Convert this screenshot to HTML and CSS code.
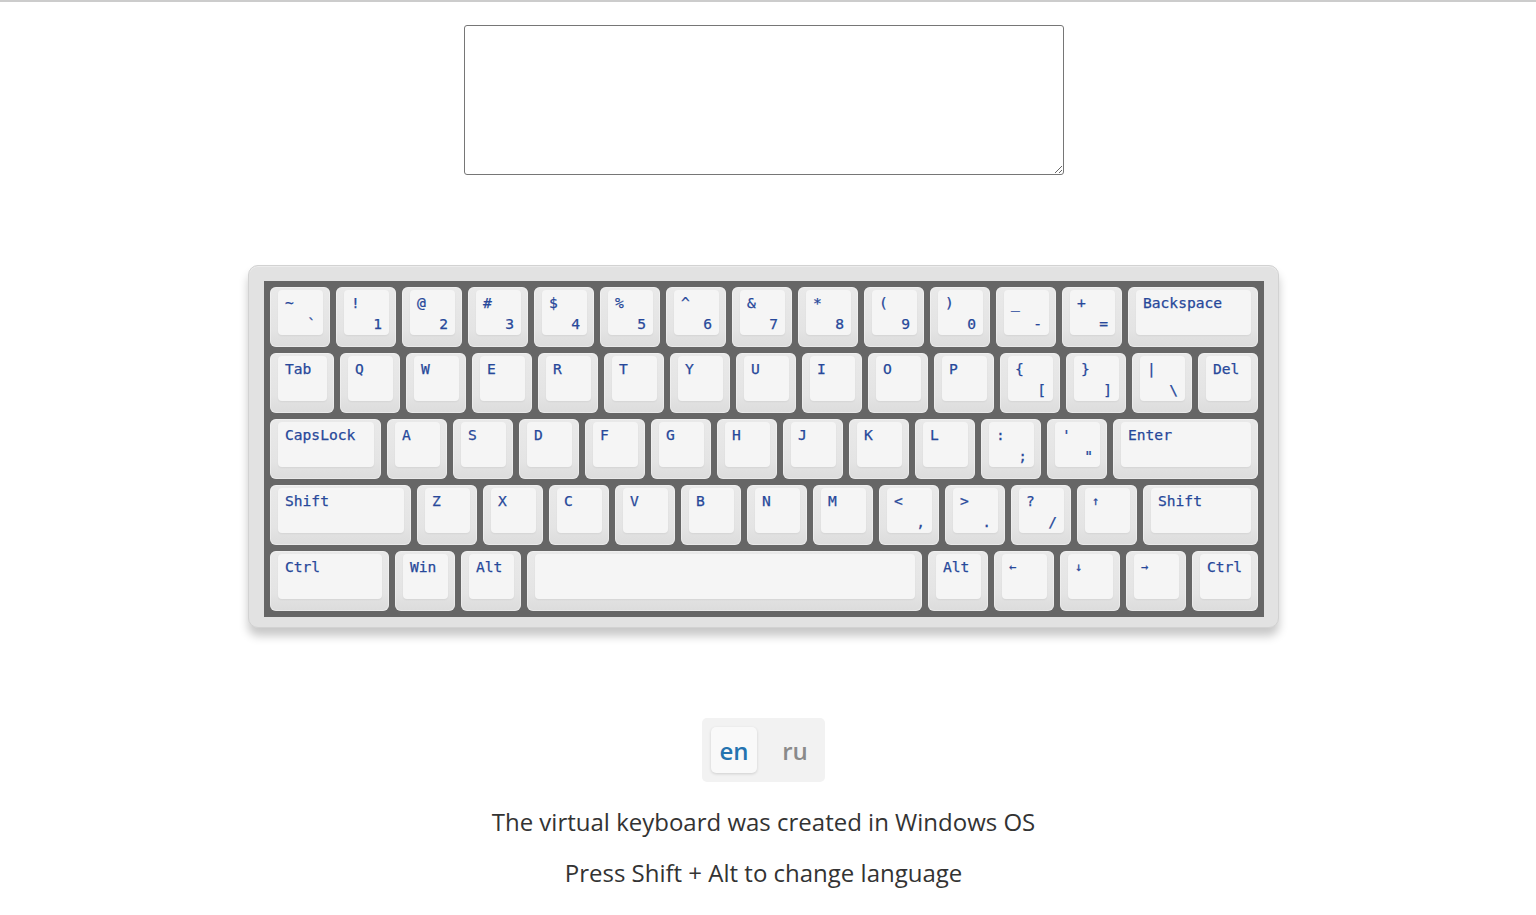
FILE: index.html
```html
<!DOCTYPE html>
<html lang="en">
<head>
<meta charset="utf-8">
<title>Virtual Keyboard</title>
<link rel="stylesheet" href="styles.css">
</head>
<body>
<div class="topline"></div>
<main class="page">
  <textarea class="input"></textarea>

  <div class="keyboard">
    <div class="plate">
      <div class="row">
        <div class="key"><div class="cap"><span class="t">~</span><span class="b">`</span></div></div>
        <div class="key"><div class="cap"><span class="t">!</span><span class="b">1</span></div></div>
        <div class="key"><div class="cap"><span class="t">@</span><span class="b">2</span></div></div>
        <div class="key"><div class="cap"><span class="t">#</span><span class="b">3</span></div></div>
        <div class="key"><div class="cap"><span class="t">$</span><span class="b">4</span></div></div>
        <div class="key"><div class="cap"><span class="t">%</span><span class="b">5</span></div></div>
        <div class="key"><div class="cap"><span class="t">^</span><span class="b">6</span></div></div>
        <div class="key"><div class="cap"><span class="t">&amp;</span><span class="b">7</span></div></div>
        <div class="key"><div class="cap"><span class="t">*</span><span class="b">8</span></div></div>
        <div class="key"><div class="cap"><span class="t">(</span><span class="b">9</span></div></div>
        <div class="key"><div class="cap"><span class="t">)</span><span class="b">0</span></div></div>
        <div class="key"><div class="cap"><span class="t">_</span><span class="b">-</span></div></div>
        <div class="key"><div class="cap"><span class="t">+</span><span class="b">=</span></div></div>
        <div class="key w130"><div class="cap"><span class="t">Backspace</span></div></div>
      </div>
      <div class="row">
        <div class="key w64"><div class="cap"><span class="t">Tab</span></div></div>
        <div class="key"><div class="cap"><span class="t">Q</span></div></div>
        <div class="key"><div class="cap"><span class="t">W</span></div></div>
        <div class="key"><div class="cap"><span class="t">E</span></div></div>
        <div class="key"><div class="cap"><span class="t">R</span></div></div>
        <div class="key"><div class="cap"><span class="t">T</span></div></div>
        <div class="key"><div class="cap"><span class="t">Y</span></div></div>
        <div class="key"><div class="cap"><span class="t">U</span></div></div>
        <div class="key"><div class="cap"><span class="t">I</span></div></div>
        <div class="key"><div class="cap"><span class="t">O</span></div></div>
        <div class="key"><div class="cap"><span class="t">P</span></div></div>
        <div class="key"><div class="cap"><span class="t">{</span><span class="b">[</span></div></div>
        <div class="key"><div class="cap"><span class="t">}</span><span class="b">]</span></div></div>
        <div class="key"><div class="cap"><span class="t">|</span><span class="b">\</span></div></div>
        <div class="key"><div class="cap"><span class="t">Del</span></div></div>
      </div>
      <div class="row">
        <div class="key w111"><div class="cap"><span class="t">CapsLock</span></div></div>
        <div class="key"><div class="cap"><span class="t">A</span></div></div>
        <div class="key"><div class="cap"><span class="t">S</span></div></div>
        <div class="key"><div class="cap"><span class="t">D</span></div></div>
        <div class="key"><div class="cap"><span class="t">F</span></div></div>
        <div class="key"><div class="cap"><span class="t">G</span></div></div>
        <div class="key"><div class="cap"><span class="t">H</span></div></div>
        <div class="key"><div class="cap"><span class="t">J</span></div></div>
        <div class="key"><div class="cap"><span class="t">K</span></div></div>
        <div class="key"><div class="cap"><span class="t">L</span></div></div>
        <div class="key"><div class="cap"><span class="t">:</span><span class="b">;</span></div></div>
        <div class="key"><div class="cap"><span class="t">'</span><span class="b">"</span></div></div>
        <div class="key w145"><div class="cap"><span class="t">Enter</span></div></div>
      </div>
      <div class="row">
        <div class="key w141"><div class="cap"><span class="t">Shift</span></div></div>
        <div class="key"><div class="cap"><span class="t">Z</span></div></div>
        <div class="key"><div class="cap"><span class="t">X</span></div></div>
        <div class="key"><div class="cap"><span class="t">C</span></div></div>
        <div class="key"><div class="cap"><span class="t">V</span></div></div>
        <div class="key"><div class="cap"><span class="t">B</span></div></div>
        <div class="key"><div class="cap"><span class="t">N</span></div></div>
        <div class="key"><div class="cap"><span class="t">M</span></div></div>
        <div class="key"><div class="cap"><span class="t">&lt;</span><span class="b">,</span></div></div>
        <div class="key"><div class="cap"><span class="t">&gt;</span><span class="b">.</span></div></div>
        <div class="key"><div class="cap"><span class="t">?</span><span class="b">/</span></div></div>
        <div class="key"><div class="cap"><span class="t arrow">↑</span></div></div>
        <div class="key w115"><div class="cap"><span class="t">Shift</span></div></div>
      </div>
      <div class="row">
        <div class="key w119"><div class="cap"><span class="t">Ctrl</span></div></div>
        <div class="key"><div class="cap"><span class="t">Win</span></div></div>
        <div class="key"><div class="cap"><span class="t">Alt</span></div></div>
        <div class="key w395"><div class="cap"></div></div>
        <div class="key"><div class="cap"><span class="t">Alt</span></div></div>
        <div class="key"><div class="cap"><span class="t arrow">←</span></div></div>
        <div class="key"><div class="cap"><span class="t arrow">↓</span></div></div>
        <div class="key"><div class="cap"><span class="t arrow">→</span></div></div>
        <div class="key w66"><div class="cap"><span class="t">Ctrl</span></div></div>
      </div>
    </div>
  </div>

  <div class="lang">
    <span class="lang-btn active">en</span>
    <span class="lang-btn">ru</span>
  </div>

  <p class="note">The virtual keyboard was created in Windows OS</p>
  <p class="note second">Press Shift + Alt to change language</p>
</main>
</body>
</html>
```

FILE: styles.css
```css
html, body {
  margin: 0;
  padding: 0;
  background: #ffffff;
}

.topline {
  height: 2px;
  background: #cccccc;
}

.page {
  width: 1527px;
  display: flex;
  flex-direction: column;
  align-items: center;
}

.input {
  box-sizing: border-box;
  width: 600px;
  height: 150px;
  margin: 23px 0 0 0;
  border: 1px solid #767676;
  border-radius: 3px;
  padding: 2px;
  resize: vertical;
  font-family: "Open Sans", sans-serif;
  font-size: 16px;
  background: #fff;
}

.keyboard {
  margin-top: 90px;
  box-sizing: border-box;
  width: 1031px;
  padding: 15px 14px 10px 15px;
  background: #e2e2e2;
  border: 1px solid #d2d2d2;
  border-radius: 10px;
  box-shadow: 0 8px 10px rgba(0, 0, 0, 0.22), inset 0 1px 0 #ececec;
}

.plate {
  width: 1000px;
  box-sizing: border-box;
  padding: 6px;
  background: #666666;
  display: flex;
  flex-direction: column;
  gap: 6px;
}

.row {
  display: flex;
  gap: 6px;
}

.key {
  box-sizing: border-box;
  width: 60px;
  height: 60px;
  flex: none;
  padding: 3px 7px 12px 8px;
  border-radius: 6px;
  background: linear-gradient(180deg, #e9e9e9 0%, #e4e4e4 70%, #dcdcdc 100%);
  box-shadow: inset 0 0 0 1px rgba(255, 255, 255, 0.35);
  display: flex;
}

.w64 { width: 64px; }
.w66 { width: 66px; }
.w111 { width: 111px; }
.w115 { width: 115px; }
.w119 { width: 119px; }
.w130 { width: 130px; }
.w141 { width: 141px; }
.w145 { width: 145px; }
.w395 { width: 395px; }

.cap {
  flex: 1;
  box-sizing: border-box;
  border-radius: 4px;
  background: #f5f5f5;
  box-shadow: 0 1px 2px rgba(0, 0, 0, 0.06);
  padding: 4px 7px 2px 0;
  display: flex;
  flex-direction: column;
  justify-content: space-between;
  font-family: "DejaVu Sans Mono", "Liberation Mono", monospace;
  font-size: 14.6px;
  line-height: 18px;
  color: #27489a;
  -webkit-text-stroke: 0.25px #27489a;
}

.cap .t {
  align-self: flex-start;
  padding-left: 7px;
  white-space: nowrap;
}

.cap .b {
  align-self: flex-end;
}

.cap .arrow {
  font-size: 12px;
}

.lang {
  margin-top: 90px;
  display: flex;
  align-items: center;
  padding: 9px 7px 9px 9px;
  background: #f2f2f2;
  border-radius: 5px;
}

.lang-btn {
  width: 46px;
  height: 46px;
  display: flex;
  align-items: center;
  justify-content: center;
  font-family: "Open Sans", sans-serif;
  font-size: 24px;
  font-weight: 600;
  color: #8a8a8a;
  border-radius: 5px;
}

.lang-btn + .lang-btn {
  margin-left: 15px;
}

.lang-btn.active {
  background: #f9f9f9;
  color: #2473b0;
  box-shadow: 0 1px 3px rgba(0, 0, 0, 0.15);
}

.note {
  margin: 22px 0 0 0;
  font-family: "Open Sans", sans-serif;
  font-size: 24px;
  line-height: 36px;
  color: #333333;
  text-align: center;
}

.note.second {
  margin-top: 15px;
}
```
